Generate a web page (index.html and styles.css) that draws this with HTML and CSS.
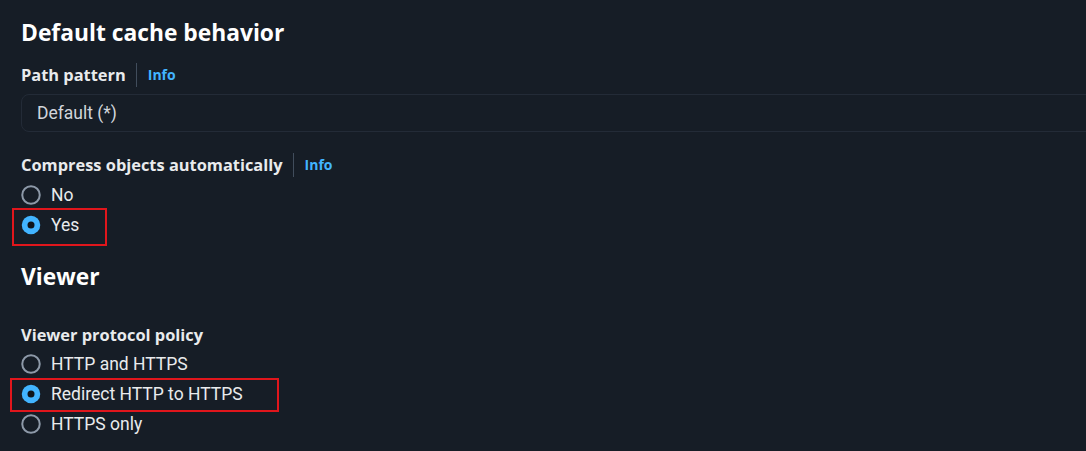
FILE: index.html
```html
<!DOCTYPE html>
<html lang="en">
<head>
<meta charset="utf-8">
<title>Default cache behavior</title>
<link rel="stylesheet" href="styles.css">
</head>
<body>
<main class="panel">
  <h2 class="heading">Default cache behavior</h2>

  <div class="label-row label-row--first">
    <span class="label">Path pattern</span>
    <span class="divider"></span>
    <a class="info" href="#">Info</a>
  </div>
  <div class="input">Default (*)</div>

  <div class="label-row label-row--compress">
    <span class="label">Compress objects automatically</span>
    <span class="divider"></span>
    <a class="info" href="#">Info</a>
  </div>
  <div class="radio-group radio-group--compress">
    <label class="radio">
      <svg class="radio-icon" viewBox="0 0 16 16"><circle cx="8" cy="8" r="7" fill="none" stroke="#8d99a8" stroke-width="1.6"/></svg>
      <span class="radio-text">No</span>
    </label>
    <label class="radio">
      <svg class="radio-icon" viewBox="0 0 16 16"><circle cx="8" cy="8" r="7.4" fill="#42b4ff"/><circle cx="8" cy="8" r="2.8" fill="#0f141a"/></svg>
      <span class="radio-text">Yes</span>
      <span class="mark mark--yes"></span>
    </label>
  </div>

  <h2 class="heading heading--viewer">Viewer</h2>

  <div class="label-row label-row--viewer">
    <span class="label">Viewer protocol policy</span>
  </div>
  <div class="radio-group radio-group--viewer">
    <label class="radio">
      <svg class="radio-icon" viewBox="0 0 16 16"><circle cx="8" cy="8" r="7" fill="none" stroke="#8d99a8" stroke-width="1.6"/></svg>
      <span class="radio-text">HTTP and HTTPS</span>
    </label>
    <label class="radio">
      <svg class="radio-icon" viewBox="0 0 16 16"><circle cx="8" cy="8" r="7.4" fill="#42b4ff"/><circle cx="8" cy="8" r="2.8" fill="#0f141a"/></svg>
      <span class="radio-text">Redirect HTTP to HTTPS</span>
      <span class="mark mark--redirect"></span>
    </label>
    <label class="radio">
      <svg class="radio-icon" viewBox="0 0 16 16"><circle cx="8" cy="8" r="7" fill="none" stroke="#8d99a8" stroke-width="1.6"/></svg>
      <span class="radio-text">HTTPS only</span>
    </label>
  </div>
</main>
</body>
</html>
```

FILE: styles.css
```css
html, body {
  margin: 0;
  padding: 0;
  background: #161d26;
  overflow: hidden;
}

body {
  font-family: Roboto, "Liberation Sans", Arial, sans-serif;
  color: #e9ebed;
}

.panel {
  padding: 18px 0 0 21px;
  display: flex;
  flex-direction: column;
}

.heading {
  margin: 0;
  font-family: "Open Sans", "Noto Sans", sans-serif;
  font-size: 22.8px;
  line-height: 30px;
  font-weight: 700;
  color: #ffffff;
}

.heading--viewer {
  margin-top: 22px;
}

.label-row {
  display: flex;
  align-items: center;
  height: 25px;
}

.label-row--first { margin-top: 14px; }
.label-row--compress { margin-top: 20px; }
.label-row--viewer { margin-top: 30px; }

.label {
  font-family: "Open Sans", "Noto Sans", sans-serif;
  font-size: 16.4px;
  font-weight: 700;
  color: #e9ebed;
}

.divider {
  width: 1px;
  height: 24px;
  background: #414d5c;
  margin: 0 11px 0 10px;
}

.info {
  font-family: "Open Sans", "Noto Sans", sans-serif;
  font-size: 14px;
  font-weight: 700;
  color: #42b4ff;
  text-decoration: none;
}

.input {
  margin-top: 7px;
  margin-right: -40px;
  height: 36px;
  border: 1px solid #232b37;
  border-radius: 8px;
  display: flex;
  align-items: center;
  padding-left: 15px;
  font-size: 17.5px;
  color: #d1d5db;
}

.radio-group {
  display: flex;
  flex-direction: column;
}

.radio-group--compress { margin-top: 3px; }
.radio-group--viewer { margin-top: 2px; }

.radio {
  position: relative;
  display: flex;
  align-items: center;
  height: 30px;
  width: fit-content;
}

.radio-icon {
  width: 20px;
  height: 20px;
  flex: none;
}

.radio-text {
  margin-left: 10px;
  font-size: 17.5px;
  color: #e9ebed;
}

.mark {
  position: absolute;
  border: 2px solid #e0161c;
  box-sizing: border-box;
  pointer-events: none;
}

.mark--yes {
  left: -9px;
  top: -2px;
  width: 95px;
  height: 38px;
}

.mark--redirect {
  left: -11px;
  top: -1px;
  width: 269px;
  height: 34px;
}
```
